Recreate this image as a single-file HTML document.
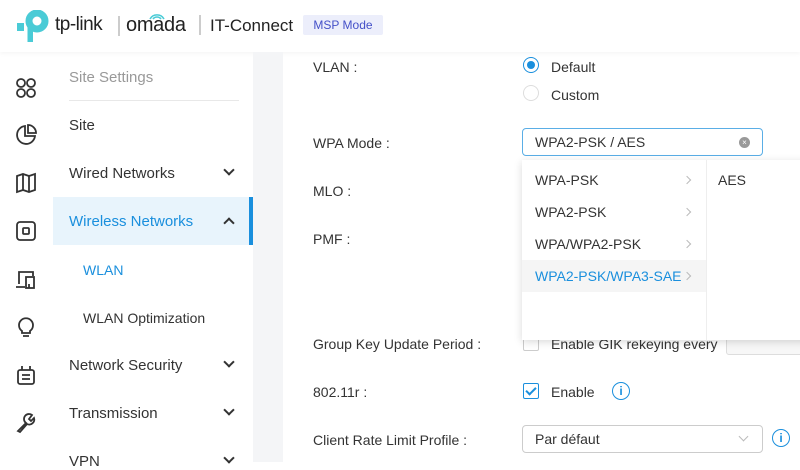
<!DOCTYPE html>
<html><head><meta charset="utf-8">
<style>
*{margin:0;padding:0;box-sizing:border-box}
body{width:800px;height:462px;overflow:hidden;background:#fff;font-family:"Liberation Sans",Arial,sans-serif;position:relative;color:#333}
.a{position:absolute;white-space:nowrap}
.nav{font-size:15px;color:#333}
.lbl{font-size:14px;color:#333}
.chev{position:absolute;left:225px;width:8px;height:8px;border-right:2px solid #333;border-bottom:2px solid #333;transform:rotate(45deg)}
.opt{position:absolute;left:522px;width:184px;height:32px;font-size:14px;padding:8px 0 0 13px;color:#333}
.opt i{position:absolute;left:162px;top:13px;width:6px;height:6px;border-right:1px solid #bbb;border-top:1px solid #bbb;transform:rotate(45deg)}
svg.ic{position:absolute;left:14px;width:24px;height:24px;fill:none;stroke:#333;stroke-width:1.8}
</style></head><body>
<!-- header -->
<div class="a" style="left:0;top:0;width:800px;height:52px;background:#fff;box-shadow:0 2px 4px rgba(0,0,0,.04)"></div>
<svg class="a" style="left:16px;top:10px" width="40" height="36" viewBox="16 10 40 36"><circle cx="37" cy="21" r="8" fill="none" stroke="#4acbd6" stroke-width="7"/><path d="M27.5 21 V42 H33 V24" fill="#4acbd6"/><rect x="17" y="23" width="7" height="8" fill="#4acbd6"/></svg>
<div class="a" style="left:55px;top:14px;font-size:19px;color:#222;letter-spacing:-0.5px">tp-link</div>
<div class="a" style="left:118px;top:16px;width:2px;height:20px;background:#ccc"></div>
<div class="a" style="left:126px;top:14px;font-size:20px;color:#222;letter-spacing:-0.3px">omada</div>
<svg class="a" style="left:148px;top:11px" width="18" height="9"><path d="M2 8 A8 8 0 0 1 16 8 M5 8 A5 5 0 0 1 13 8" stroke="#4acbd6" stroke-width="1.6" fill="none"/></svg>
<div class="a" style="left:199px;top:15px;width:2px;height:20px;background:#ccc"></div>
<div class="a" style="left:210px;top:16px;font-size:17px;color:#222">IT-Connect</div>
<div class="a" style="left:303px;top:15px;width:80px;height:20px;background:#eceefb;border-radius:2px;color:#4450c8;font-size:12px;text-align:center;line-height:20px">MSP Mode</div>
<!-- gray strip -->
<div class="a" style="left:253px;top:52px;width:30px;height:410px;background:#f4f5f7"></div>
<!-- icon rail -->
<svg class="ic" style="top:76px" viewBox="0 0 24 24"><circle cx="7" cy="7" r="4"/><circle cx="17" cy="7" r="4"/><circle cx="7" cy="17" r="4"/><circle cx="17" cy="17" r="4"/></svg>
<svg class="ic" style="top:123px" viewBox="0 0 24 24"><path d="M11 3 A9 9 0 1 0 21 13 H11 Z"/><path d="M14 2 A8 8 0 0 1 22 10 H14 Z"/></svg>
<svg class="ic" style="top:171px" viewBox="0 0 24 24"><path d="M3 5 L9 3 L15 5 L21 3 V19 L15 21 L9 19 L3 21 Z M9 3 V19 M15 5 V21"/></svg>
<svg class="ic" style="top:219px" viewBox="0 0 24 24"><rect x="3" y="3" width="18" height="18" rx="3"/><rect x="9" y="9" width="6" height="6" rx="1"/></svg>
<svg class="ic" style="top:267px" viewBox="0 0 24 24"><path d="M5 17 V5 H19 V9 M2 20 H11"/><rect x="12" y="10" width="8" height="11"/><path d="M15 17 V21"/></svg>
<svg class="ic" style="top:315px" viewBox="0 0 24 24"><path d="M8 16 A7 7 0 1 1 16 16 V18 H8 Z M9 21 H15"/></svg>
<svg class="ic" style="top:363px" viewBox="0 0 24 24"><rect x="4" y="7" width="16" height="14" rx="2"/><path d="M8 3 V7 M16 3 V7 M8 12 H16 M8 16 H16"/></svg>
<svg class="ic" style="top:411px" viewBox="0 0 24 24"><path d="M4 20 L12 12 A5 5 0 0 1 18 4 L15 8 L17 10 L20 7 A5 5 0 0 1 13 13 L6 21 Z"/></svg>
<!-- nav -->
<div class="a nav" style="left:69px;top:69px;color:#999">Site Settings</div>
<div class="a" style="left:69px;top:100px;width:170px;height:1px;background:#e8e8e8"></div>
<div class="a nav" style="left:69px;top:117px">Site</div>
<div class="a nav" style="left:69px;top:165px">Wired Networks</div><div class="chev" style="top:166px"></div>
<div class="a" style="left:53px;top:197px;width:200px;height:48px;background:#e8f4fc"></div>
<div class="a" style="left:249px;top:197px;width:4px;height:48px;background:#1a8fdd"></div>
<div class="a nav" style="left:69px;top:213px;color:#1a8fdd">Wireless Networks</div><div class="chev" style="top:219px;transform:rotate(-135deg)"></div>
<div class="a" style="left:83px;top:262px;font-size:14px;color:#1a8fdd">WLAN</div>
<div class="a" style="left:83px;top:310px;font-size:14px">WLAN Optimization</div>
<div class="a nav" style="left:69px;top:357px">Network Security</div><div class="chev" style="top:358px"></div>
<div class="a nav" style="left:69px;top:405px">Transmission</div><div class="chev" style="top:406px"></div>
<div class="a nav" style="left:69px;top:453px">VPN</div><div class="chev" style="top:454px"></div>
<!-- form -->
<div class="a lbl" style="left:313px;top:59px">VLAN :</div>
<div class="a" style="left:523px;top:57px;width:16px;height:16px;border:1px solid #1a8fdd;border-radius:50%"></div>
<div class="a" style="left:527px;top:61px;width:8px;height:8px;background:#1a8fdd;border-radius:50%"></div>
<div class="a lbl" style="left:551px;top:59px">Default</div>
<div class="a" style="left:523px;top:85px;width:16px;height:16px;border:1px solid #ddd;border-radius:50%"></div>
<div class="a lbl" style="left:551px;top:87px">Custom</div>
<div class="a lbl" style="left:313px;top:135px">WPA Mode :</div>
<div class="a" style="left:522px;top:128px;width:241px;height:28px;border:1px solid #5aaee6;border-radius:4px"></div>
<div class="a lbl" style="left:535px;top:134px">WPA2-PSK / AES</div>
<div class="a" style="left:739px;top:137px;width:11px;height:11px;border-radius:50%;background:#999;color:#fff;font-size:8px;text-align:center;line-height:11px">×</div>
<div class="a lbl" style="left:313px;top:183px">MLO :</div>
<div class="a lbl" style="left:313px;top:231px">PMF :</div>
<div class="a lbl" style="left:313px;top:336px">Group Key Update Period :</div>
<div class="a" style="left:523px;top:335px;width:16px;height:16px;border:1px solid #ccc;border-radius:2px"></div>
<div class="a lbl" style="left:551px;top:336px">Enable GIK rekeying every</div>
<div class="a" style="left:726px;top:331px;width:80px;height:24px;border:1px solid #ddd;border-radius:3px;background:#f7f7f7"></div>
<!-- dropdown -->
<div class="a" style="left:522px;top:160px;width:290px;height:180px;background:#fff;box-shadow:0 2px 8px rgba(0,0,0,.15)"></div>
<div class="a" style="left:706px;top:160px;width:1px;height:180px;background:#eee"></div>
<div class="opt" style="top:164px">WPA-PSK<i></i></div>
<div class="opt" style="top:196px">WPA2-PSK<i></i></div>
<div class="opt" style="top:228px">WPA/WPA2-PSK<i></i></div>
<div class="opt" style="top:260px;background:#f5f5f5;color:#1a8fdd">WPA2-PSK/WPA3-SAE<i></i></div>
<div class="a lbl" style="left:718px;top:172px">AES</div>
<!-- 802.11r -->
<div class="a lbl" style="left:313px;top:384px">802.11r :</div>
<div class="a" style="left:523px;top:383px;width:16px;height:16px;border:1px solid #1a8fdd;border-radius:2px"></div>
<div class="a" style="left:528px;top:385px;width:6px;height:10px;border-right:2px solid #1a8fdd;border-bottom:2px solid #1a8fdd;transform:rotate(45deg)"></div>
<div class="a lbl" style="left:551px;top:384px">Enable</div>
<div class="a" style="left:612px;top:382px;width:18px;height:18px;border:1.5px solid #1a8fdd;border-radius:50%;color:#1a8fdd;font-size:12px;text-align:center;line-height:16px;font-weight:bold">i</div>
<div class="a lbl" style="left:313px;top:432px">Client Rate Limit Profile :</div>
<div class="a" style="left:522px;top:425px;width:241px;height:28px;border:1px solid #ccc;border-radius:4px"></div>
<div class="a lbl" style="left:535px;top:431px">Par défaut</div>
<div class="a" style="left:740px;top:433px;width:7px;height:7px;border-right:1px solid #bbb;border-bottom:1px solid #bbb;transform:rotate(45deg)"></div>
<div class="a" style="left:772px;top:429px;width:18px;height:18px;border:1.5px solid #1a8fdd;border-radius:50%;color:#1a8fdd;font-size:12px;text-align:center;line-height:16px;font-weight:bold">i</div>
</body></html>
